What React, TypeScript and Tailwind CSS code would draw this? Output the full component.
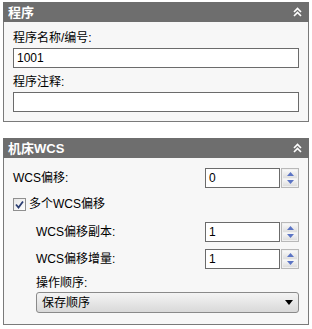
import React from 'react';

const font = { fontFamily: '"Liberation Sans", "Noto Sans CJK SC", sans-serif' };

const Collapse = () => (
  <svg width="9" height="10" viewBox="0 0 9 10" className="mr-[3px]">
    <polyline points="1,5 4.5,1.5 8,5" fill="none" stroke="#fff" strokeWidth="1.6" />
    <polyline points="1,9 4.5,5.5 8,9" fill="none" stroke="#fff" strokeWidth="1.6" />
  </svg>
);

const PanelHeader = ({ title }: { title: string }) => (
  <div className="h-5 bg-[#6e6e6e] flex items-center justify-between pl-[5px] pr-[4px]">
    <span className="text-white font-bold text-[13px] leading-none">{title}</span>
    <Collapse />
  </div>
);

const Spinner = ({ value }: { value: string }) => (
  <div className="flex items-stretch h-5 w-[94px]">
    <div className="flex-1 bg-white border border-[#6b6b6b] flex items-center pl-[3px] text-[12px] text-black">
      {value}
    </div>
    <div className="ml-[1px] w-[18px] border border-[#b8b8b8] bg-[#f0f0f0] flex flex-col p-[1px] gap-[1px]">
      <div className="flex-1 bg-gradient-to-b from-[#f8f8f8] to-[#dedede] flex items-center justify-center">
        <svg width="7" height="4" viewBox="0 0 7 4"><polygon points="0,4 3.5,0 7,4" fill="#5b74c4" /></svg>
      </div>
      <div className="flex-1 bg-gradient-to-b from-[#f8f8f8] to-[#dedede] flex items-center justify-center">
        <svg width="7" height="4" viewBox="0 0 7 4"><polygon points="0,0 7,0 3.5,4" fill="#5b74c4" /></svg>
      </div>
    </div>
  </div>
);

export default function App() {
  return (
    <div className="w-[312px] h-[329px] bg-white pt-[2px] pl-[3px] text-black" style={font}>
      <div className="w-[306px]">
        <PanelHeader title="程序" />
        <div className="bg-[#f7f7f7] border-x border-b border-[#7a7a7a] px-[9px] pt-2 pb-[9px]">
          <div className="h-4 text-[12px] leading-4">程序名称/编号:</div>
          <div className="mt-[2px] h-5 bg-white border border-[#6b6b6b] flex items-center pl-[3px] text-[12px]">1001</div>
          <div className="mt-[6px] h-4 text-[12px] leading-4">程序注释:</div>
          <div className="mt-[2px] h-5 bg-white border border-[#6b6b6b]"></div>
        </div>
      </div>

      <div className="w-[306px] mt-4">
        <PanelHeader title="机床WCS" />
        <div className="bg-[#f7f7f7] border-x border-b border-[#7a7a7a] px-[9px] pt-[10px] pb-[11px] text-[12px]">
          <div className="flex items-center justify-between h-5">
            <span>WCS偏移:</span>
            <Spinner value="0" />
          </div>
          <div className="mt-2 h-4 flex items-center gap-[3px]">
            <div className="w-[13px] h-[13px] border border-[#8f8f8f] bg-gradient-to-br from-[#e6e6e6] to-white flex items-center justify-center">
              <svg width="9" height="9" viewBox="0 0 9 9">
                <polyline points="1,4.5 3.5,7.5 8,1.5" fill="none" stroke="#2c3e72" strokeWidth="1.8" />
              </svg>
            </div>
            <span>多个WCS偏移</span>
          </div>
          <div className="pl-[23px]">
            <div className="mt-[10px] flex items-center justify-between h-5">
              <span>WCS偏移副本:</span>
              <Spinner value="1" />
            </div>
            <div className="mt-[7px] flex items-center justify-between h-5">
              <span>WCS偏移增量:</span>
              <Spinner value="1" />
            </div>
            <div className="mt-[6px] h-4 leading-4">操作顺序:</div>
            <div className="mt-[1px] h-[21px] rounded-[3px] border border-[#8a8a8a] bg-gradient-to-b from-[#f4f4f4] to-[#d9d9d9] flex items-center justify-between pl-[5px] pr-[5px]">
              <span>保存顺序</span>
              <svg width="8" height="5" viewBox="0 0 8 5"><polygon points="0,0 8,0 4,5" fill="#000" /></svg>
            </div>
          </div>
        </div>
      </div>
    </div>
  );
}
